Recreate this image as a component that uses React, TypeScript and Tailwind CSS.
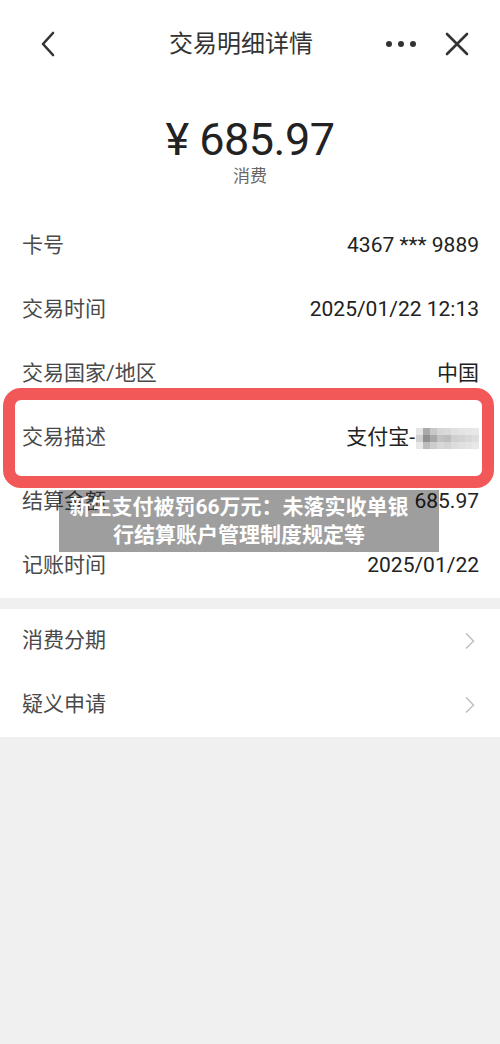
import React from "react";

const font = { fontFamily: 'Roboto, "Noto Sans CJK SC", sans-serif' };

const rows: { label: string; value: React.ReactNode }[] = [
  { label: "卡号", value: "4367 *** 9889" },
  { label: "交易时间", value: "2025/01/22 12:13" },
  { label: "交易国家/地区", value: "中国" },
  { label: "交易描述", value: "desc" },
  { label: "结算金额", value: "685.97" },
  { label: "记账时间", value: "2025/01/22" },
];

// pixelated mosaic that hides the merchant name
const mosaic = [
  ["#e4e4e4", "#a9a9a9", "#c8c8c8", "#d6d6d6", "#dadada", "#e0e0e0", "#e3e3e3", "#e6e6e6", "#e8e8e8"],
  ["#d0d0d0", "#8f8f8f", "#a8a8a8", "#c2c2c2", "#bdbdbd", "#cfcfcf", "#d2d2d2", "#d8d8d8", "#dedede"],
  ["#e8e8e8", "#bcbcbc", "#cdcdcd", "#d8d8d8", "#d4d4d4", "#dcdcdc", "#e0e0e0", "#e4e4e4", "#e8e8e8"],
];

function Mosaic() {
  return (
    <div className="flex flex-col blur-[0.6px]">
      {mosaic.map((r, i) => (
        <div key={i} className="flex">
          {r.map((c, j) => (
            <div key={j} className="w-[7px] h-[7px]" style={{ backgroundColor: c }} />
          ))}
        </div>
      ))}
    </div>
  );
}

function Chevron() {
  return (
    <svg width="12" height="18" viewBox="0 0 12 18" fill="none">
      <path d="M2 1.5 L9.5 9 L2 16.5" stroke="#bdbdbd" strokeWidth="1.4" />
    </svg>
  );
}

export default function App() {
  return (
    <div className="w-[500px] h-[1044px] bg-[#f0f0f0] relative overflow-hidden" style={font}>
      <div className="bg-white">
        {/* header */}
        <div className="h-[88px] flex items-center justify-between pl-[36px] pr-[30px] relative">
          <svg width="24" height="28" viewBox="0 0 24 28" fill="none">
            <path d="M17 3 L7 14 L17 25" stroke="#333" strokeWidth="2.6" strokeLinecap="round" strokeLinejoin="round" />
          </svg>
          <div className="absolute left-0 right-[18px] text-center text-[24px] text-[#333] pointer-events-none">
            交易明细详情
          </div>
          <div className="flex items-center gap-[28px]">
            <div className="flex items-center gap-[6px]">
              <span className="w-[6px] h-[6px] rounded-full bg-[#333]" />
              <span className="w-[6px] h-[6px] rounded-full bg-[#333]" />
              <span className="w-[6px] h-[6px] rounded-full bg-[#333]" />
            </div>
            <svg width="26" height="26" viewBox="0 0 26 26" fill="none">
              <path d="M3 3 L23 23 M23 3 L3 23" stroke="#333" strokeWidth="2.6" strokeLinecap="round" />
            </svg>
          </div>
        </div>

        {/* amount */}
        <div className="flex flex-col items-center pt-[26px] pb-[28px]">
          <div className="text-[45px] leading-[52px] text-[#222] tracking-[-0.5px]">¥ 685.97</div>
          <div className="text-[17px] leading-[20px] text-[#666]">消费</div>
        </div>

        {/* detail rows */}
        <div>
          {rows.map((r) => (
            <div key={r.label} className="h-[64px] flex items-center justify-between pl-[22px] pr-[21px]">
              <span className="text-[21px] text-[#4a4a4a]">{r.label}</span>
              {r.value === "desc" ? (
                <span className="flex items-center text-[21px] text-[#222]">
                  支付宝-
                  <span className="ml-[1px]">
                    <Mosaic />
                  </span>
                </span>
              ) : (
                <span className="text-[21px] text-[#222]">{r.value}</span>
              )}
            </div>
          ))}
        </div>
      </div>

      {/* menu rows */}
      <div className="bg-white mt-[11px]">
        {["消费分期", "疑义申请"].map((t) => (
          <div key={t} className="h-[64px] flex items-center justify-between pl-[22px] pr-[24px]">
            <span className="text-[21px] text-[#4a4a4a]">{t}</span>
            <Chevron />
          </div>
        ))}
      </div>

      {/* red highlight annotation */}
      <div className="absolute left-[3px] top-[388px] w-[491px] h-[100px] border-[12px] border-[#f25858] rounded-[18px]" />

      {/* caption overlay */}
      <div className="absolute left-[59px] top-[490px] w-[380px] h-[62px] pr-[20px] bg-black/[0.38] flex flex-col items-center justify-center text-white font-bold text-[21px] leading-[28px]">
        <div>新生支付被罚66万元：未落实收单银</div>
        <div>行结算账户管理制度规定等</div>
      </div>
    </div>
  );
}
